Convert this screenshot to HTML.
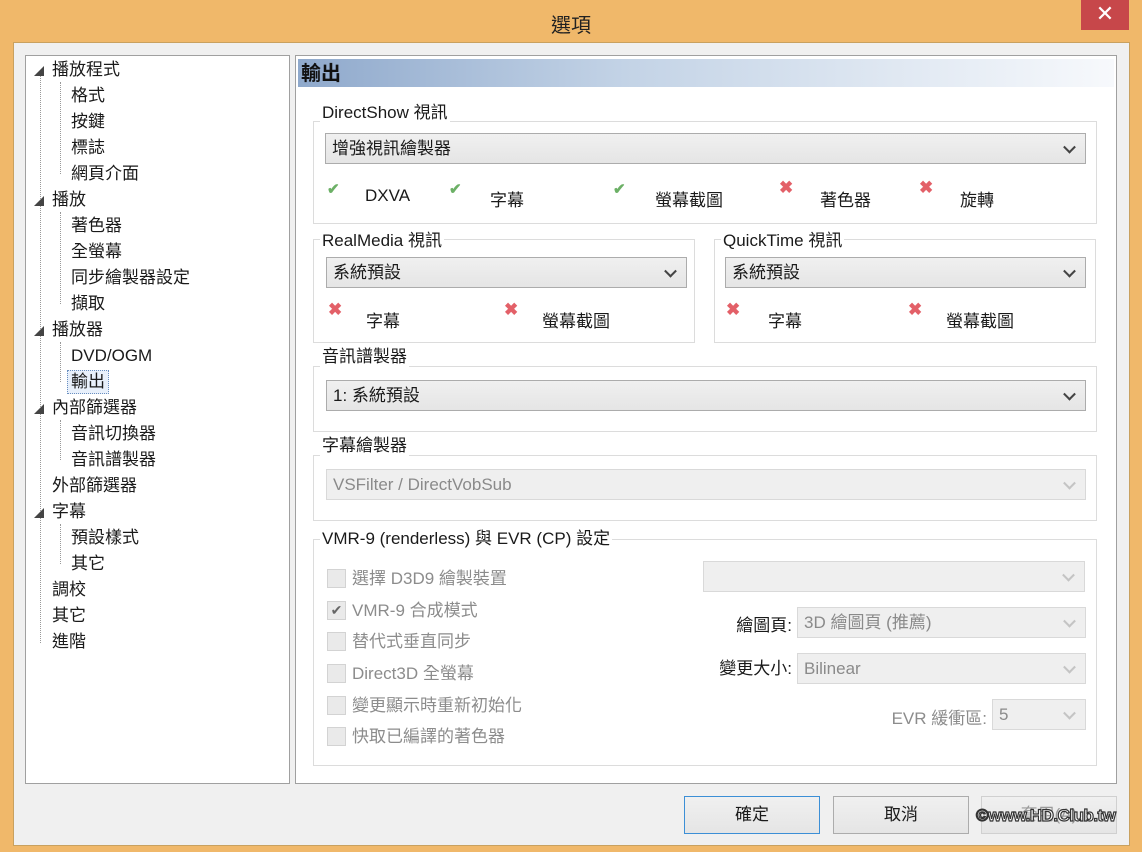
<!DOCTYPE html>
<html><head><meta charset="utf-8">
<style>
*{margin:0;padding:0;box-sizing:border-box}
body{width:1142px;height:852px;background:#f0b86a;position:relative;overflow:hidden;font-family:"Segoe UI","Liberation Sans","Noto Sans CJK TC",sans-serif;font-size:17px;color:#1a1a1a}
.a{position:absolute;white-space:nowrap}
.t{line-height:20px}
.client{position:absolute;left:13px;top:42px;width:1117px;height:804px;background:#f0f0f0;border:1px solid #c9a15f}
.panel{position:absolute;background:#fff;border:1px solid #a0a0a0}
.gb{position:absolute;border:1px solid #dcdcdc}
.lbl{position:absolute;background:#fff;padding:0 2px;line-height:20px}
.sel{position:absolute;border:1px solid #acacac;background:linear-gradient(#f0f0f0,#e5e5e5);line-height:29px;padding-left:6px}
.sel.d{border-color:#d9d9d9;background:#efefef;color:#8a8a8a}
.sel::after{content:"";position:absolute;right:11px;top:50%;width:7px;height:7px;border-right:2px solid #444;border-bottom:2px solid #444;transform:translateY(-70%) rotate(45deg)}
.sel.d::after{border-color:#c4c4c4}
.ok{position:absolute;color:#6cb066;font-size:15px;font-weight:bold}
.no{position:absolute;color:#e36068;font-size:17px;font-weight:bold}
.cb{position:absolute;width:19px;height:19px;border:1px solid #d3d3d3;background:#eaeaea}
.dis{color:#8c8c8c}
.btn{position:absolute;height:38px;border:1px solid #acacac;background:linear-gradient(#f0f0f0,#e5e5e5);text-align:center;line-height:36px}
.tr .a{line-height:20px}
.dl{position:absolute;border-left:1px dotted #999}
</style></head><body>
<div class="a" style="left:0;top:9px;width:1142px;text-align:center;font-size:20px;color:#222">選項</div>
<div class="a" style="left:1081px;top:0;width:48px;height:30px;background:#c7474a;color:#fff;text-align:center;font-size:22px;line-height:28px">✕</div>
<div class="client"></div>
<div class="panel" style="left:25px;top:55px;width:265px;height:729px"></div>
<div class="tr">
<div class="dl" style="left:40px;top:75px;height:568px"></div>
<div class="dl" style="left:60px;top:82px;height:92px"></div>
<div class="dl" style="left:60px;top:212px;height:92px"></div>
<div class="dl" style="left:60px;top:342px;height:40px"></div>
<div class="dl" style="left:60px;top:420px;height:40px"></div>
<div class="dl" style="left:60px;top:524px;height:40px"></div>
<div class="a" style="left:34px;top:63px;font-size:10px;color:#444">◢</div>
<div class="a" style="left:34px;top:193px;font-size:10px;color:#444">◢</div>
<div class="a" style="left:34px;top:323px;font-size:10px;color:#444">◢</div>
<div class="a" style="left:34px;top:401px;font-size:10px;color:#444">◢</div>
<div class="a" style="left:34px;top:505px;font-size:10px;color:#444">◢</div>
<div class="a" style="left:52px;top:60px">播放程式</div>
<div class="a" style="left:71px;top:86px">格式</div>
<div class="a" style="left:71px;top:112px">按鍵</div>
<div class="a" style="left:71px;top:138px">標誌</div>
<div class="a" style="left:71px;top:164px">網頁介面</div>
<div class="a" style="left:52px;top:190px">播放</div>
<div class="a" style="left:71px;top:216px">著色器</div>
<div class="a" style="left:71px;top:242px">全螢幕</div>
<div class="a" style="left:71px;top:268px">同步繪製器設定</div>
<div class="a" style="left:71px;top:294px">擷取</div>
<div class="a" style="left:52px;top:320px">播放器</div>
<div class="a" style="left:71px;top:346px">DVD/OGM</div>
<div class="a" style="left:67px;top:370px;width:42px;height:24px;border:1px dotted #6a8fc0;background:#e8f0fb"></div>
<div class="a" style="left:71px;top:372px">輸出</div>
<div class="a" style="left:52px;top:398px">內部篩選器</div>
<div class="a" style="left:71px;top:424px">音訊切換器</div>
<div class="a" style="left:71px;top:450px">音訊譜製器</div>
<div class="a" style="left:52px;top:476px">外部篩選器</div>
<div class="a" style="left:52px;top:502px">字幕</div>
<div class="a" style="left:71px;top:528px">預設樣式</div>
<div class="a" style="left:71px;top:554px">其它</div>
<div class="a" style="left:52px;top:580px">調校</div>
<div class="a" style="left:52px;top:606px">其它</div>
<div class="a" style="left:52px;top:632px">進階</div>
</div>
<div class="panel" style="left:295px;top:55px;width:822px;height:729px"></div>
<div class="a" style="left:298px;top:59px;width:816px;height:28px;background:linear-gradient(90deg,#8fa9cc,#c3d3e6 40%,#f7f9fc)"></div>
<div class="a" style="left:301px;top:60px;font-size:20px;font-weight:bold;line-height:28px;color:#111">輸出</div>

<div class="gb" style="left:313px;top:121px;width:784px;height:103px"></div>
<div class="lbl" style="left:320px;top:103px">DirectShow 視訊</div>
<div class="sel" style="left:325px;top:133px;width:761px;height:31px">增強視訊繪製器</div>
<div class="ok" style="left:327px;top:180px">✔</div><div class="a" style="left:365px;top:186px">DXVA</div>
<div class="ok" style="left:449px;top:180px">✔</div><div class="a" style="left:490px;top:186px">字幕</div>
<div class="ok" style="left:613px;top:180px">✔</div><div class="a" style="left:655px;top:186px">螢幕截圖</div>
<div class="no" style="left:779px;top:178px">✖</div><div class="a" style="left:820px;top:186px">著色器</div>
<div class="no" style="left:919px;top:178px">✖</div><div class="a" style="left:960px;top:186px">旋轉</div>

<div class="gb" style="left:313px;top:239px;width:382px;height:104px"></div>
<div class="lbl" style="left:320px;top:231px">RealMedia 視訊</div>
<div class="sel" style="left:326px;top:257px;width:361px;height:31px">系統預設</div>
<div class="no" style="left:328px;top:300px">✖</div><div class="a" style="left:366px;top:307px">字幕</div>
<div class="no" style="left:504px;top:300px">✖</div><div class="a" style="left:542px;top:307px">螢幕截圖</div>

<div class="gb" style="left:714px;top:239px;width:382px;height:104px"></div>
<div class="lbl" style="left:721px;top:231px">QuickTime 視訊</div>
<div class="sel" style="left:725px;top:257px;width:361px;height:31px">系統預設</div>
<div class="no" style="left:726px;top:300px">✖</div><div class="a" style="left:768px;top:307px">字幕</div>
<div class="no" style="left:908px;top:300px">✖</div><div class="a" style="left:946px;top:307px">螢幕截圖</div>

<div class="gb" style="left:313px;top:366px;width:784px;height:66px"></div>
<div class="lbl" style="left:320px;top:347px">音訊譜製器</div>
<div class="sel" style="left:326px;top:380px;width:760px;height:31px">1: 系統預設</div>

<div class="gb" style="left:313px;top:455px;width:784px;height:66px"></div>
<div class="lbl" style="left:320px;top:436px">字幕繪製器</div>
<div class="sel d" style="left:326px;top:469px;width:760px;height:31px">VSFilter / DirectVobSub</div>

<div class="gb" style="left:313px;top:539px;width:784px;height:227px"></div>
<div class="lbl" style="left:320px;top:529px">VMR-9 (renderless) 與 EVR (CP) 設定</div>
<div class="cb" style="left:327px;top:569px"></div><div class="a dis t" style="left:352px;top:569px">選擇 D3D9 繪製裝置</div>
<div class="cb" style="left:327px;top:601px;color:#666;font-size:14px;line-height:17px;text-align:center">✔</div><div class="a dis t" style="left:352px;top:601px">VMR-9 合成模式</div>
<div class="cb" style="left:327px;top:632px"></div><div class="a dis t" style="left:352px;top:632px">替代式垂直同步</div>
<div class="cb" style="left:327px;top:664px"></div><div class="a dis t" style="left:352px;top:664px">Direct3D 全螢幕</div>
<div class="cb" style="left:327px;top:696px"></div><div class="a dis t" style="left:352px;top:696px">變更顯示時重新初始化</div>
<div class="cb" style="left:327px;top:727px"></div><div class="a dis t" style="left:352px;top:727px">快取已編譯的著色器</div>
<div class="sel d" style="left:703px;top:561px;width:382px;height:31px"></div>
<div class="a t" style="left:700px;top:616px;width:92px;text-align:right">繪圖頁:</div>
<div class="sel d" style="left:797px;top:607px;width:289px;height:31px">3D 繪圖頁 (推薦)</div>
<div class="a t" style="left:700px;top:659px;width:92px;text-align:right">變更大小:</div>
<div class="sel d" style="left:797px;top:653px;width:289px;height:31px">Bilinear</div>
<div class="a t dis" style="left:860px;top:709px;width:127px;text-align:right">EVR 緩衝區:</div>
<div class="sel d" style="left:992px;top:699px;width:94px;height:31px">5</div>

<div class="btn" style="left:684px;top:796px;width:136px;border-color:#3c8fd6">確定</div>
<div class="btn" style="left:833px;top:796px;width:136px">取消</div>
<div class="btn" style="left:981px;top:796px;width:136px;color:#9a9a9a;border-color:#d0d0d0">套用(A)</div>
<div class="a" style="left:976px;top:806px;font-size:17px;font-weight:bold;color:#fff;-webkit-text-stroke:1.2px #333;letter-spacing:-0.5px">©www.HD.Club.tw</div>
</body></html>
